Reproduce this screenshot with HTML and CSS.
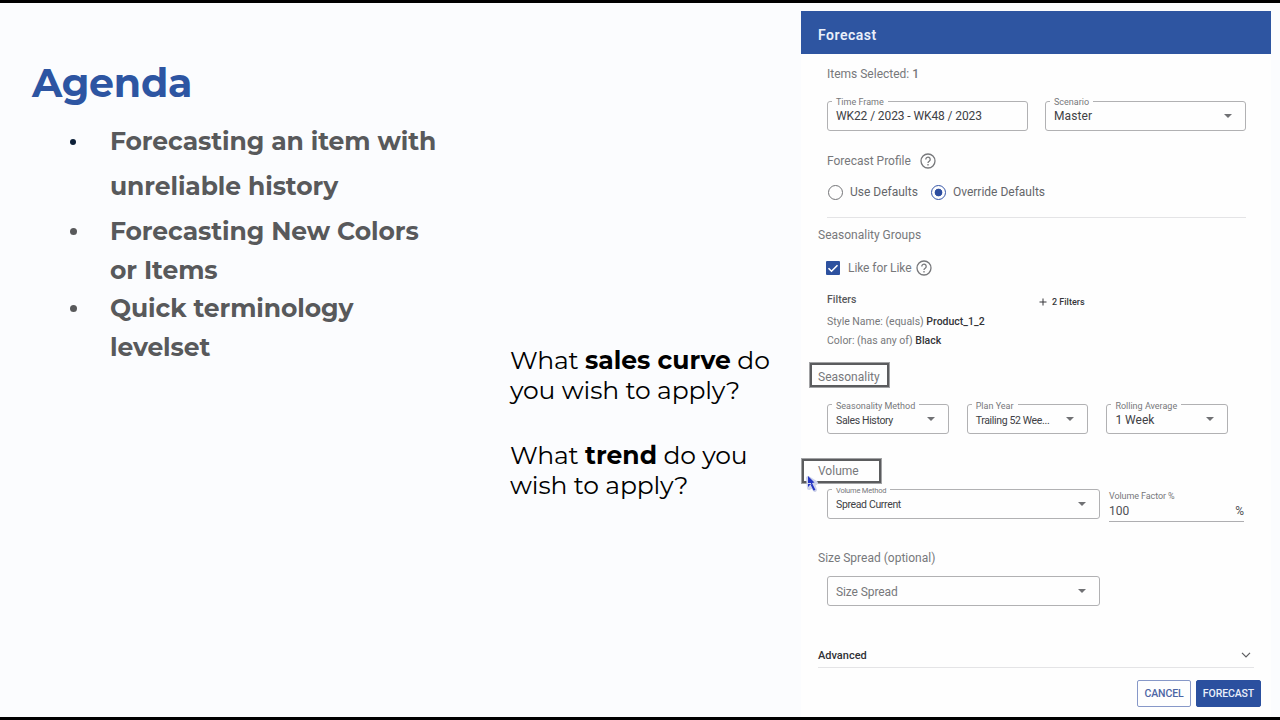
FILE: index.html
```
<!DOCTYPE html>
<html lang="en">

    <head>
        <meta charset="utf-8">
        <title>Agenda</title>
        <meta name="viewport" content="width=device-width, initial-scale=1.0">
        <link rel="stylesheet" href="styles.css">
    </head>

    <body>
        <section class="agenda">
            <h1>Agenda</h1>
            <ul>
                <li class="loose">Forecasting an item with<br>unreliable history</li>
                <li>Forecasting New Colors<br>or Items</li>
                <li>Quick terminology<br>levelset</li>
            </ul>
        </section>

        <section class="questions">
            <p>What <b>sales curve</b> do<br>you wish to apply?</p>
            <p>What <b>trend</b> do you<br>wish to apply?</p>
        </section>

        <form class="panel">
            <header>Forecast</header>

            <div class="row items">Items Selected:&nbsp;<b>1</b></div>
            <div class="fields top-fields">
                <div class="field"><label>Time Frame</label><span class="val timeframe">WK22 / 2023 - WK48 / 2023</span></div>
                <div class="field"><label>Scenario</label><span class="val master">Master</span><i class="caret"></i></div>
            </div>

            <div class="row profile">Forecast Profile
                <svg class="help" viewBox="0 0 16 16"><circle cx="8" cy="8" r="7"/><path d="M5.8 6.4a2.2 2.2 0 1 1 3.4 1.8C8.4 8.7 8 9 8 9.9"/><path d="M8 11.1v1.4"/></svg>
            </div>
            <div class="row radios">
                <span class="radio"></span><span class="use">Use Defaults</span>
                <span class="radio on"></span><span>Override Defaults</span>
            </div>
            <div class="divider"></div>

            <div class="row groups">Seasonality Groups</div>
            <div class="row like">
                <svg class="check" viewBox="0 0 14 14"><rect width="14" height="14" rx="1"/><path d="M2.5 7.2l3 3 6-6"/></svg>
                <span>Like for Like</span>
                <svg class="help" viewBox="0 0 16 16"><circle cx="8" cy="8" r="7"/><path d="M5.8 6.4a2.2 2.2 0 1 1 3.4 1.8C8.4 8.7 8 9 8 9.9"/><path d="M8 11.1v1.4"/></svg>
            </div>
            <div class="filters">
                <div class="filter-list">
                    <h3>Filters</h3>
                    <div class="style-name">Style Name: (equals) <b>Product_1_2</b></div>
                    <div class="color">Color: (has any of) <b>Black</b></div>
                </div>
                <div class="add-filter"><svg viewBox="0 0 8 8"><path d="M4 .5v7M.5 4h7"/></svg>2 Filters</div>
            </div>

            <div class="marked seasonality">Seasonality</div>
            <div class="fields season-fields">
                <div class="field"><label>Seasonality Method</label><span class="val small">Sales History</span><i class="caret"></i></div>
                <div class="field"><label>Plan Year</label><span class="val small">Trailing 52 Wee...</span><i class="caret"></i></div>
                <div class="field"><label>Rolling Average</label><span class="val week">1 Week</span><i class="caret"></i></div>
            </div>

            <div class="marked volume">Volume
                <svg class="cursor" viewBox="0 0 16 20"><path class="glow" d="M5 5l1 10 3-2 3 4-2-6 3-1z"/><path d="M5 3l6.500 6.500-2.500.5 3.500 7-2 .5-3-6L5 14z"/><path class="shine" d="M5 10.500h3M7 13l1-1.500"/></svg>
            </div>
            <div class="fields volume-fields">
                <div class="field"><label class="tiny">Volume Method</label><span class="val small">Spread Current</span><i class="caret"></i></div>
                <div class="factor">
                    <label>Volume Factor %</label>
                    <div class="amount"><span>100</span><span>%</span></div>
                </div>
            </div>

            <div class="row size-title">Size Spread (optional)</div>
            <div class="fields size-fields">
                <div class="field"><span class="val placeholder">Size Spread</span><i class="caret"></i></div>
            </div>

            <div class="advanced"><b>Advanced</b><svg viewBox="0 0 10 6"><path d="M1 .8l4 4 4-4"/></svg></div>
            <div class="actions">
                <button type="button" class="cancel">CANCEL</button>
                <button type="button" class="submit">FORECAST</button>
            </div>
        </form>
    </body>

</html>
```
FILE: styles.css
```
* {
    box-sizing: border-box;
}

body {
    margin: 0;
    width: 1280px;
    height: 720px;
    overflow: hidden;
    display: flex;
    background: #fbfcfe;
    border-top: 3px solid #000;
    border-bottom: 3px solid #000;
    font-family: Roboto, "Liberation Sans", sans-serif;
}

.agenda {
    width: 510px;
    padding: 56px 0 0 32px;
    font-family: Montserrat, Inter, sans-serif;
    color: #58595b;
}

h1 {
    margin: 0;
    font-size: 39.5px;
    font-weight: 700;
    line-height: 48px;
    letter-spacing: -0.3px;
    color: #2d55a2;
}

ul {
    margin: 12px 0 0;
    padding: 0 0 0 78px;
    list-style: none;
    font-size: 25px;
    font-weight: 700;
    letter-spacing: -0.08px;
    white-space: nowrap;
}

li {
    line-height: 38.5px;
}

li::before {
    content: "";
    float: left;
    width: 7px;
    height: 7px;
    margin: 16px 0 0 -40px;
    border-radius: 50%;
    background: #58595b;
}

.loose {
    line-height: 45px;
    margin-bottom: 3px;
}

.loose::before {
    width: 6px;
    height: 6px;
    margin-top: 20px;
    background: #0c1f38;
}

.questions {
    width: 291px;
    padding-top: 342px;
    font-family: Montserrat, Inter, sans-serif;
    font-size: 25px;
    font-weight: 400;
    letter-spacing: -0.12px;
    line-height: 30px;
    white-space: nowrap;
    color: #000;
}

.questions p {
    margin: 0 0 35px;
}

.questions b {
    font-weight: 700;
    letter-spacing: 0;
}

.panel {
    width: 470px;
    height: 706px;
    margin-top: 8px;
    background: #fefefe;
    color: #77787b;
    font-size: 12px;
    letter-spacing: 0;
    white-space: nowrap;
}

.panel header {
    height: 43px;
    padding: 4px 17px 0;
    line-height: 40px;
    font-size: 14px;
    font-weight: 600;
    letter-spacing: 0.5px;
    color: #e9effa;
    background: #2e55a1;
}

.row {
    display: flex;
    align-items: center;
    height: 20px;
    padding-left: 26px;
}

.items {
    margin-top: 10px;
}

.panel b {
    font-weight: 500;
}

.fields {
    display: flex;
    padding-left: 26px;
}

.field {
    position: relative;
    display: flex;
    align-items: center;
    justify-content: space-between;
    height: 30px;
    padding: 0 13px 0 8px;
    border: 1px solid #b1b1b3;
    border-radius: 3px;
}

.field label {
    position: absolute;
    top: -5px;
    left: 4px;
    padding: 0 4px;
    font-size: 9px;
    line-height: 11px;
    background: #fefefe;
}

.field label.tiny {
    font-size: 7.5px;
    letter-spacing: -0.2px;
}

.val {
    color: #404145;
}

.val.timeframe {
    letter-spacing: -0.1px;
}

.val.master {
    letter-spacing: 0.1px;
}

.val.small {
    padding-top: 1px;
    font-size: 10.5px;
    letter-spacing: -0.35px;
}

.val.week {
    padding-top: 2px;
}

.val.placeholder {
    color: #77787b;
}

.caret {
    border: 4px solid transparent;
    border-top-color: #707174;
    border-bottom: 0;
}

.top-fields {
    margin-top: 17px;
    gap: 17px;
}

.top-fields .field {
    width: 201px;
}

.profile {
    margin-top: 20px;
    gap: 9px;
}

.help {
    width: 16px;
    height: 16px;
    fill: none;
    stroke: #77787b;
    stroke-width: 1.3;
}

.radios {
    height: 22px;
    margin-top: 10px;
    padding-left: 27px;
    color: #65666a;
}

.radio {
    width: 15px;
    height: 15px;
    margin-right: 7px;
    border: 1.5px solid #737477;
    border-radius: 50%;
}

.radio.on {
    border-color: #3655a8;
    background: radial-gradient(circle, #2d4d9f 3.5px, transparent 4.2px);
}

.use {
    margin-right: 13px;
}

.divider {
    width: 419px;
    height: 1px;
    margin: 14px 0 0 26px;
    background: #e4e4e6;
}

.groups {
    height: 20px;
    margin-top: 7px;
    padding-left: 17px;
}

.like {
    margin-top: 13px;
    padding-left: 25px;
}

.like span {
    margin: 0 5px 0 8px;
    letter-spacing: -0.08px;
}

.check {
    width: 14px;
    height: 14px;
}

.check rect {
    fill: #2d519f;
}

.check path {
    fill: none;
    stroke: #fff;
    stroke-width: 1.6;
}

.filters {
    display: flex;
    padding-left: 26px;
    height: 71px;
    margin-top: 12px;
    font-size: 10.5px;
}

.filter-list {
    width: 212px;
}

.filters h3 {
    margin: 0 0 3px;
    font-size: 10.5px;
    font-weight: 500;
    line-height: 19px;
    color: #58595c;
}

.filters .style-name,
.filters .color {
    line-height: 19px;
}

.filters b {
    color: #333438;
}

.add-filter {
    display: flex;
    align-items: center;
    gap: 5px;
    height: 23px;
    font-size: 9px;
    font-weight: 500;
    color: #36373a;
}

.add-filter svg {
    width: 8px;
    height: 8px;
    fill: none;
    stroke: #36373a;
}

/* boxed section titles */
.marked {
    position: relative;
    display: flex;
    align-items: center;
    height: 26px;
    border: 3px solid #5b5c5e;
    outline: 1px solid #a2a3a5;
    outline-offset: -1px;
}

.seasonality {
    width: 81px;
    margin: 1px 0 0 8px;
    padding: 3px 0 0 6px;
}

.volume {
    width: 81px;
    margin-top: 24px;
    padding-left: 14px;
}

.cursor {
    position: absolute;
    left: -1px;
    top: 12px;
    width: 16px;
    height: 20px;
    fill: #2435c3;
}

.cursor .glow {
    fill: none;
    stroke: #cfd4ea;
    stroke-width: 4;
    stroke-linejoin: round;
}

.cursor .shine {
    stroke: #cfd4ea;
    stroke-width: 1;
}

.season-fields {
    margin-top: 16px;
    gap: 18px;
}

.season-fields .field {
    width: 121.7px;
}

.season-fields .field label {
    top: -4px;
}

.season-fields .small {
    padding-top: 2px;
}

.volume-fields {
    margin-top: 5px;
    gap: 9px;
}

.volume-fields .field,
.size-fields .field {
    width: 273px;
}

.factor {
    width: 135px;
    height: 33px;
    border-bottom: 1px solid #aeaeb1;
}

.factor label {
    display: block;
    font-size: 9px;
    line-height: 14px;
    letter-spacing: -0.1px;
}

.amount {
    display: flex;
    justify-content: space-between;
    line-height: 16px;
    color: #505155;
}

.size-title {
    height: 22px;
    margin-top: 25px;
    padding-left: 17px;
}

.size-fields {
    margin-top: 7px;
}

.size-fields .val {
    padding-top: 1px;
    letter-spacing: -0.1px;
}

.advanced {
    display: flex;
    align-items: center;
    justify-content: space-between;
    width: 436px;
    height: 26px;
    margin: 36px 0 0 17px;
    padding: 1px 3px 0 0;
    border-bottom: 1px solid #e4e4e6;
    font-size: 11px;
    color: #303135;
}

.advanced svg {
    width: 10px;
    height: 6px;
    fill: none;
    stroke: #5c5d60;
    stroke-width: 1.2;
}

.actions {
    display: flex;
    justify-content: flex-end;
    gap: 5px;
    margin: 12px 10px 0 0;
}

.actions button {
    height: 27px;
    padding: 0;
    border: 1px solid #8798c8;
    border-radius: 2px;
    font: 500 10.5px Roboto, sans-serif;
    letter-spacing: -0.1px;
}

.cancel {
    width: 54px;
    color: #4c65a5;
    background: #fefefe;
}

.actions .submit {
    width: 65px;
    color: #e9effa;
    background: #2b509f;
    border-color: #2b509f;
}
```
